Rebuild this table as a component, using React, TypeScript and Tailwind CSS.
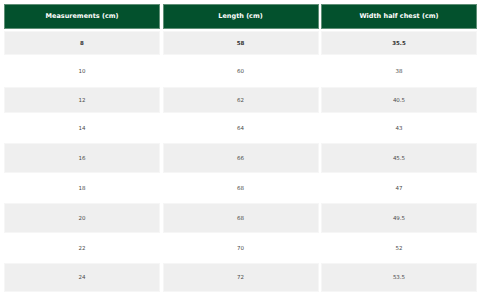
import React from "react";

const rows: { h: string; a: string; b: string; c: string; bold?: boolean }[] = [
  { h: "h-[24px]", a: "8", b: "58", c: "35.5", bold: true },
  { h: "h-[32px]", a: "10", b: "60", c: "38" },
  { h: "h-[26px]", a: "12", b: "62", c: "40.5" },
  { h: "h-[30px]", a: "14", b: "64", c: "43" },
  { h: "h-[30px]", a: "16", b: "66", c: "45.5" },
  { h: "h-[30px]", a: "18", b: "68", c: "47" },
  { h: "h-[30px]", a: "20", b: "68", c: "49.5" },
  { h: "h-[30px]", a: "22", b: "70", c: "52" },
  { h: "h-[29px]", a: "24", b: "72", c: "53.5" },
];

export default function App() {
  return (
    <div
      className="w-[480px] h-[294px] bg-white pl-[4px] pt-[4px] overflow-hidden"
      style={{ fontFamily: '"DejaVu Sans", "Open Sans", sans-serif' }}
    >
      <div className="w-[473px] flex flex-col">
        <div className="grid grid-cols-3 gap-x-[2.5px] h-[25px] mb-[2px]">
          {["Measurements (cm)", "Length (cm)", "Width half chest (cm)"].map((t) => (
            <div
              key={t}
              className="bg-[#03512d] border border-[#5f8f76] flex items-center justify-center text-white text-[6.5px] font-semibold"
            >
              {t}
            </div>
          ))}
        </div>
        {rows.map((r, i) => (
          <div key={i} className={`grid grid-cols-3 gap-x-[2.5px] ${r.h}`}>
            {[r.a, r.b, r.c].map((v, j) => (
              <div
                key={j}
                className={`flex items-center justify-center text-[5.5px] text-[#4a4a4a] ${
                  i % 2 === 0 ? "bg-[#efefef] border border-[#f6f6f6]" : "bg-white"
                } ${r.bold ? "font-bold text-[#333]" : "font-medium"}`}
              >
                {v}
              </div>
            ))}
          </div>
        ))}
      </div>
    </div>
  );
}
